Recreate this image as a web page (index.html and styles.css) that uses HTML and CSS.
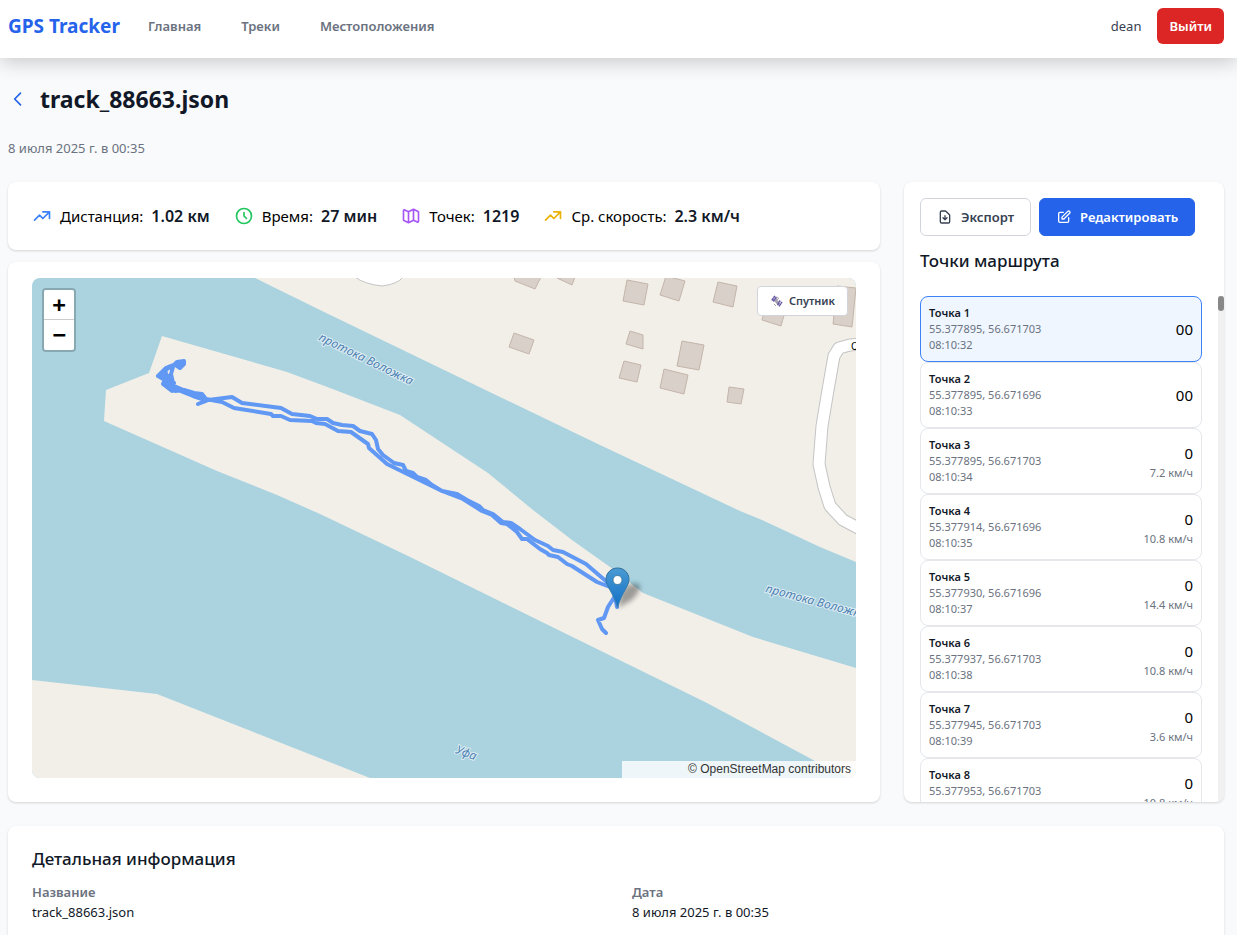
FILE: index.html
```html
<!DOCTYPE html>
<html lang="ru">
<head>
<meta charset="utf-8">
<meta name="viewport" content="width=device-width, initial-scale=1">
<title>GPS Tracker</title>
<link rel="stylesheet" href="styles.css">
</head>
<body>
<header class="topbar">
  <a class="logo" href="#">GPS Tracker</a>
  <nav class="nav">
    <a href="#">Главная</a>
    <a href="#">Треки</a>
    <a href="#">Местоположения</a>
  </nav>
  <span class="user">dean</span>
  <button class="logout" type="button">Выйти</button>
</header>

<main class="page">
  <div class="title-row">
    <a class="back" href="#" aria-label="Назад"><svg class="icon" viewBox="0 0 24 24"><path d="M15 19l-7-7 7-7"/></svg></a>
    <h1>track_88663.json</h1>
  </div>
  <p class="date">8 июля 2025 г. в 00:35</p>

  <div class="layout">
    <div class="left">
      <section class="card stats">
        <div class="stat"><svg class="icon blue" viewBox="0 0 24 24"><path d="M13 7h8m0 0v8m0-8l-8 8-4-4-6 6"/></svg><span>Дистанция:</span><strong>1.02 км</strong></div>
        <div class="stat"><svg class="icon green" viewBox="0 0 24 24"><path d="M12 8v4l3 3m6-3a9 9 0 11-18 0 9 9 0 0118 0z"/></svg><span>Время:</span><strong>27 мин</strong></div>
        <div class="stat"><svg class="icon purple" viewBox="0 0 24 24"><path d="M9 20l-5.447-2.724A1 1 0 013 16.382V5.618a1 1 0 011.447-.894L9 7m0 13l6-3m-6 3V7m6 10l4.553 2.276A1 1 0 0021 18.382V7.618a1 1 0 00-.553-.894L15 4m0 13V4m0 0L9 7"/></svg><span>Точек:</span><strong>1219</strong></div>
        <div class="stat"><svg class="icon yellow" viewBox="0 0 24 24"><path d="M13 7h8m0 0v8m0-8l-8 8-4-4-6 6"/></svg><span>Ср. скорость:</span><strong>2.3 км/ч</strong></div>
      </section>

      <section class="card map-card">
        <div class="map">
          <svg class="map-canvas" viewBox="32 278 824 500" preserveAspectRatio="xMidYMid slice">
            <defs>
              <linearGradient id="pin" x1="0" y1="0" x2="0" y2="1"><stop offset="0" stop-color="#4a9bd3"/><stop offset="1" stop-color="#126fc6"/></linearGradient>
              <linearGradient id="pin-edge" x1="0" y1="0" x2="0" y2="1"><stop offset="0" stop-color="#2e6c97"/><stop offset="1" stop-color="#3883b7"/></linearGradient>
              <filter id="soft" x="-50%" y="-50%" width="200%" height="200%"><feGaussianBlur stdDeviation="2.5"/></filter>
            </defs>
            <g class="land">
              <path d="M255 278L320 310L500 397L600 445L740 511L762 520L820 547L856 562V278Z"/>
              <path d="M162 336L287 372L330 388L400 415L488 473L533 510L572 540L610 567L643 593L753 637L856 668V778H848L815 761L707 703L540 621L406 555L320 514L277 495L217 471L104 421L106 390L149 373Z"/>
              <path d="M32 680L157 694L370 778H32Z"/>
            </g>
            <path class="lane" d="M355 277Q364 284 382 286Q398 284 403 277"/>
            <g class="buildings">
              <path d="M514 276L515 281L535 289L541 277Z"/>
              <path d="M557 278L572 285L575 277Z"/>
              <path d="M627 280L648 284L644 305L623 301Z"/>
              <path d="M666 276L685 281L679 301L660 295Z"/>
              <path d="M718 282L737 286L733 307L713 302Z"/>
              <path d="M765 308L762 320L781 326L785 312Z"/>
              <path d="M837 286L856 288L852 327L833 324Z"/>
              <path d="M514 333L534 340L529 354L509 347Z"/>
              <path d="M630 331L643 335V349L626 344Z"/>
              <path d="M624 361L641 365L637 382L619 378Z"/>
              <path d="M682 341L704 345L699 370L677 366Z"/>
              <path d="M664 369L688 375L684 394L660 388Z"/>
              <path d="M729 387L744 389L741 404L727 402Z"/>
            </g>
            <g class="road">
              <path class="casing" d="M862 344L850 345L839 348L834 356L828 390L822 426L819 464L824 487L830 506L843 520L862 530"/>
              <path class="fill" d="M862 344L850 345L839 348L834 356L828 390L822 426L819 464L824 487L830 506L843 520L862 530"/>
            </g>
            <text class="street" x="851" y="350">О</text>
            <g class="water-label">
              <text transform="translate(318 340) rotate(26)">протока Воложка</text>
              <text transform="translate(765 592) rotate(15)">протока Воложка</text>
              <text transform="translate(455 753) rotate(20)">Уфа</text>
            </g>
            <g class="track">
              <path d="M184 361L177 362L173 366L166 368L158 376L165 380L163 384L172 391L176 389L183 392L193 396L202 399L206 401L198 404L208 400L232 397L242 403L281 408L292 414L310 416L317 419L327 419L333 423L342 425L353 426L360 431L372 434L376 440L378 449L383 455L394 463L403 465L406 471L413 473L417 477L426 480L432 485L442 491L457 494L467 500L479 506L483 510L493 514L503 522L511 523L520 529L535 540L548 546L553 550L563 552L586 564L607 582M184 361L184 364L180 368L177 366L181 362L168 367L162 372L168 376L166 381L174 383L170 387L175 391L184 390L194 393L202 394L206 399L222 402L234 408L271 414L273 416L281 416L290 420L312 421L316 423L325 424L338 431L351 432L368 444L369 448L387 464L442 491L463 499L482 511L492 515L501 523L507 524L517 532L522 539L527 539L540 549L547 553L549 555L558 557L567 564L572 566L597 582L610 587M617 607L615 596L608 607L604 618L598 620L602 629L606 633M162 375L168 368L173 367L171 374L173 383L171 389L166 382L165 371L170 384M174 386L186 391M190 394L202 398L206 400"/>
            </g>
            <path class="pin-shadow" filter="url(#soft)" d="M618 608L621 592Q630 580 640 585Q641 591 632 600Z"/>
            <g transform="translate(605 567)">
              <path class="pin" d="M12.5 1C6 1 1 6 1 12.5C1 19 8 25 12.5 40.500C17 25 24 19 24 12.500C24 6 19 1 12.500 1Z"/>
              <circle cx="12.5" cy="13" r="4.500" fill="#fff" stroke="#2e6c97" stroke-width=".8"/>
            </g>
          </svg>
          <div class="zoom">
            <button type="button" aria-label="Приблизить">+</button>
            <button type="button" aria-label="Отдалить">−</button>
          </div>
          <button class="satellite" type="button">
            <svg viewBox="0 0 12 12" width="12" height="12"><path d="M3.500 3.500L8 9.500" stroke="#a9a3ad" stroke-width="3"/><path d="M5 2.500L7 5M6 1.500L8 4M3 9L5 11" stroke="#aaa4b4" stroke-width="1"/><path d="M3.800.8L.8 5.500M5.300 2L2.300 6.500M9.200 5.500L6.500 10M11 6.800L8 11.300" stroke="#685aa5" stroke-width="1.500"/><path d="M2 2.500L4.500 4.500M8 7L10.500 9" stroke="#c3bde0" stroke-width=".6"/></svg>
            Спутник
          </button>
          <div class="attribution">© OpenStreetMap contributors</div>
        </div>
      </section>
    </div>

    <aside class="card side">
      <div class="actions">
        <button class="btn" type="button"><svg class="icon" viewBox="0 0 24 24"><path d="M12 10v6m0 0l-3-3m3 3l3-3m2 8H7a2 2 0 01-2-2V5a2 2 0 012-2h5.586a1 1 0 01.707.293l5.414 5.414a1 1 0 01.293.707V19a2 2 0 01-2 2z"/></svg>Экспорт</button>
        <button class="btn primary" type="button"><svg class="icon" viewBox="0 0 24 24"><path d="M11 5H6a2 2 0 00-2 2v11a2 2 0 002 2h11a2 2 0 002-2v-5m-1.414-9.414a2 2 0 112.828 2.828L11.828 15H9v-2.828l8.586-8.586z"/></svg>Редактировать</button>
      </div>
      <h2>Точки маршрута</h2>
      <div class="list-wrap">
        <ul class="points">
          <li class="point active"><div><b>Точка 1</b><span>55.377895, 56.671703</span><span>08:10:32</span></div><div class="value">00</div></li>
          <li class="point"><div><b>Точка 2</b><span>55.377895, 56.671696</span><span>08:10:33</span></div><div class="value">00</div></li>
          <li class="point"><div><b>Точка 3</b><span>55.377895, 56.671703</span><span>08:10:34</span></div><div class="value">0<span>7.2 км/ч</span></div></li>
          <li class="point"><div><b>Точка 4</b><span>55.377914, 56.671696</span><span>08:10:35</span></div><div class="value">0<span>10.8 км/ч</span></div></li>
          <li class="point"><div><b>Точка 5</b><span>55.377930, 56.671696</span><span>08:10:37</span></div><div class="value">0<span>14.4 км/ч</span></div></li>
          <li class="point"><div><b>Точка 6</b><span>55.377937, 56.671703</span><span>08:10:38</span></div><div class="value">0<span>10.8 км/ч</span></div></li>
          <li class="point"><div><b>Точка 7</b><span>55.377945, 56.671703</span><span>08:10:39</span></div><div class="value">0<span>3.6 км/ч</span></div></li>
          <li class="point"><div><b>Точка 8</b><span>55.377953, 56.671703</span><span>08:10:40</span></div><div class="value">0<span>10.8 км/ч</span></div></li>
        </ul>
        <div class="scrollbar"><div class="thumb"></div></div>
      </div>
    </aside>
  </div>

  <section class="card details">
    <h2>Детальная информация</h2>
    <dl>
      <div><dt>Название</dt><dd>track_88663.json</dd></div>
      <div><dt>Дата</dt><dd>8 июля 2025 г. в 00:35</dd></div>
    </dl>
  </section>
</main>
</body>
</html>
```
FILE: styles.css
```css
* { box-sizing: border-box; }

body {
  margin: 0;
  min-height: 100vh;
  display: flex;
  flex-direction: column;
  background: #f9fafb;
  color: #000;
  font: 15px/24px "Noto Sans", "Open Sans", sans-serif;
}

h1, h2, p, ul, dl, dd { margin: 0; padding: 0; }
ul { list-style: none; }
a { text-decoration: none; }
button { font-family: inherit; cursor: pointer; }

.icon {
  flex: none;
  width: 20px;
  height: 20px;
  fill: none;
  stroke: currentColor;
  stroke-width: 2;
  stroke-linecap: round;
  stroke-linejoin: round;
}
.blue { color: #3b82f6; }
.green { color: #22c55e; }
.purple { color: #a855f7; }
.yellow { color: #eab308; }

/* Header */
.topbar {
  position: relative;
  display: flex;
  align-items: center;
  padding: 8px 13px 14px 8px;
  background: #fff;
  box-shadow: 0 4px 20px rgba(0, 0, 0, .2);
}
.logo { color: #2563eb; font-size: 19px; font-weight: 700; line-height: 28px; }
.nav { display: flex; gap: 40px; margin-left: 28px; }
.nav a { color: #6b7280; font-size: 13px; font-weight: 600; line-height: 20px; }
.user { margin-left: auto; color: #374151; font-size: 13px; line-height: 20px; }
.logout {
  margin-left: 16px;
  padding: 8px 12px;
  border: 0;
  border-radius: 6px;
  background: #dc2626;
  color: #fff;
  font-size: 13px;
  font-weight: 600;
  line-height: 20px;
}

/* Page */
.page {
  flex: 1;
  display: flex;
  flex-direction: column;
  padding: 24px 13px 0 8px;
}
.title-row { display: flex; align-items: center; gap: 12px; }
.back { display: flex; color: #2563eb; }
h1 { color: #111827; font-size: 23px; font-weight: 700; line-height: 34px; }
.date { margin: 22px 0 24px; color: #6b7280; font-size: 13px; line-height: 20px; }
h2 { color: #111827; font-size: 17px; font-weight: 500; line-height: 28px; }

.card {
  border-radius: 8px;
  background: #fff;
  box-shadow: 0 1px 3px rgba(0, 0, 0, .1), 0 1px 2px rgba(0, 0, 0, .06);
}
.layout { display: grid; grid-template-columns: minmax(0, 1fr) 320px; gap: 24px; }
.left { display: flex; flex-direction: column; gap: 12px; }

.stats { display: flex; gap: 24px; padding: 20px 24px; }
.stat { display: flex; align-items: center; gap: 8px; line-height: 28px; }
.stat strong { color: #111827; font-size: 16px; font-weight: 600; }

/* Map */
.map-card { padding: 16px 24px 24px; }
.map {
  position: relative;
  height: 500px;
  overflow: hidden;
  border-radius: 8px;
  background: #aad3df;
}
.map-canvas { display: block; width: 100%; height: 100%; }
.land { fill: #f2efe9; }
.lane { fill: #fff; stroke: #c4c4c4; }
.buildings { fill: #d9d0c9; stroke: #c4b5aa; }
.road { fill: none; stroke-linejoin: round; }
.road .casing { stroke: #c4c4c4; stroke-width: 13; }
.road .fill { fill: none; stroke: #fff; stroke-width: 11; }
.street { font-size: 10px; fill: #000; }
.water-label {
  fill: #4d80b3;
  stroke: rgba(255, 255, 255, .6);
  stroke-width: 2;
  paint-order: stroke;
  font-size: 12px;
  font-style: italic;
}
.track {
  fill: none;
  stroke: #3b82f6;
  stroke-width: 4;
  stroke-linecap: round;
  stroke-linejoin: round;
  opacity: .8;
}
.pin { fill: url(#pin); stroke: url(#pin-edge); }
.pin-shadow { fill: #000; opacity: .35; }

.zoom {
  position: absolute;
  top: 10px;
  left: 10px;
  display: flex;
  flex-direction: column;
  border: 2px solid rgba(0, 0, 0, .2);
  border-radius: 4px;
  background-clip: padding-box;
}
.zoom button {
  width: 30px;
  height: 30px;
  padding: 0;
  border: 0;
  background: #fff;
  color: #000;
  font: bold 22px/28px "DejaVu Sans Mono", monospace;
}
.zoom button:first-child { border-bottom: 1px solid #ccc; border-radius: 2px 2px 0 0; }
.zoom button:last-child { border-radius: 0 0 2px 2px; }

.satellite {
  position: absolute;
  top: 8px;
  right: 8px;
  display: flex;
  align-items: center;
  gap: 6px;
  padding: 6px 12px 6px 13px;
  border: 1px solid #d1d5db;
  border-radius: 4px;
  background: #fff;
  color: #374151;
  font-size: 11px;
  font-weight: 600;
  line-height: 16px;
}
.satellite svg { fill: none; }
.attribution {
  position: absolute;
  right: 0;
  bottom: 0;
  width: 234px;
  padding: 0 5px;
  background: rgba(255, 255, 255, .8);
  color: #333;
  font: 12px/17px "Liberation Sans", Arial, sans-serif;
  text-align: right;
}

/* Sidebar */
.side { display: flex; flex-direction: column; padding: 16px 0 0 16px; overflow: hidden; }
.actions { display: flex; gap: 8px; }
.btn {
  display: flex;
  align-items: center;
  gap: 8px;
  padding: 8px 16px;
  border: 1px solid #d1d5db;
  border-radius: 6px;
  background: #fff;
  color: #374151;
  font-size: 13px;
  font-weight: 600;
  line-height: 20px;
}
.btn .icon { width: 16px; height: 16px; }
.btn.primary { border-color: #2563eb; background: #2563eb; color: #fff; }
.side h2 { margin: 11px 0 21px; }
.list-wrap { flex: 1; display: flex; gap: 16px; contain: size; overflow: hidden; }
.points { flex: 1; overflow-y: auto; scrollbar-width: none; }
.scrollbar { width: 6px; background: #f1f1f1; }
.thumb { height: 15px; border-radius: 3px; background: #888; }
.point {
  display: flex;
  align-items: center;
  justify-content: space-between;
  min-height: 66px;
  padding: 8px;
  border: 1px solid #e5e7eb;
  border-radius: 8px;
}
.point.active { border-color: #3b82f6; background: #eff6ff; }
.point b, .point span { display: block; font-size: 11px; line-height: 16px; }
.point b { color: #111827; font-weight: 600; }
.point span { color: #6b7280; }
.value { text-align: right; }

/* Details */
.details { flex: 1; margin-top: 24px; padding: 19px 24px 13px; border-radius: 8px 8px 0 0; }
dl { display: grid; grid-template-columns: 1fr 1fr; gap: 32px; margin-top: 9px; font-size: 13px; line-height: 20px; }
dt { color: #6b7280; font-weight: 600; }
dd { color: #111827; }
```
